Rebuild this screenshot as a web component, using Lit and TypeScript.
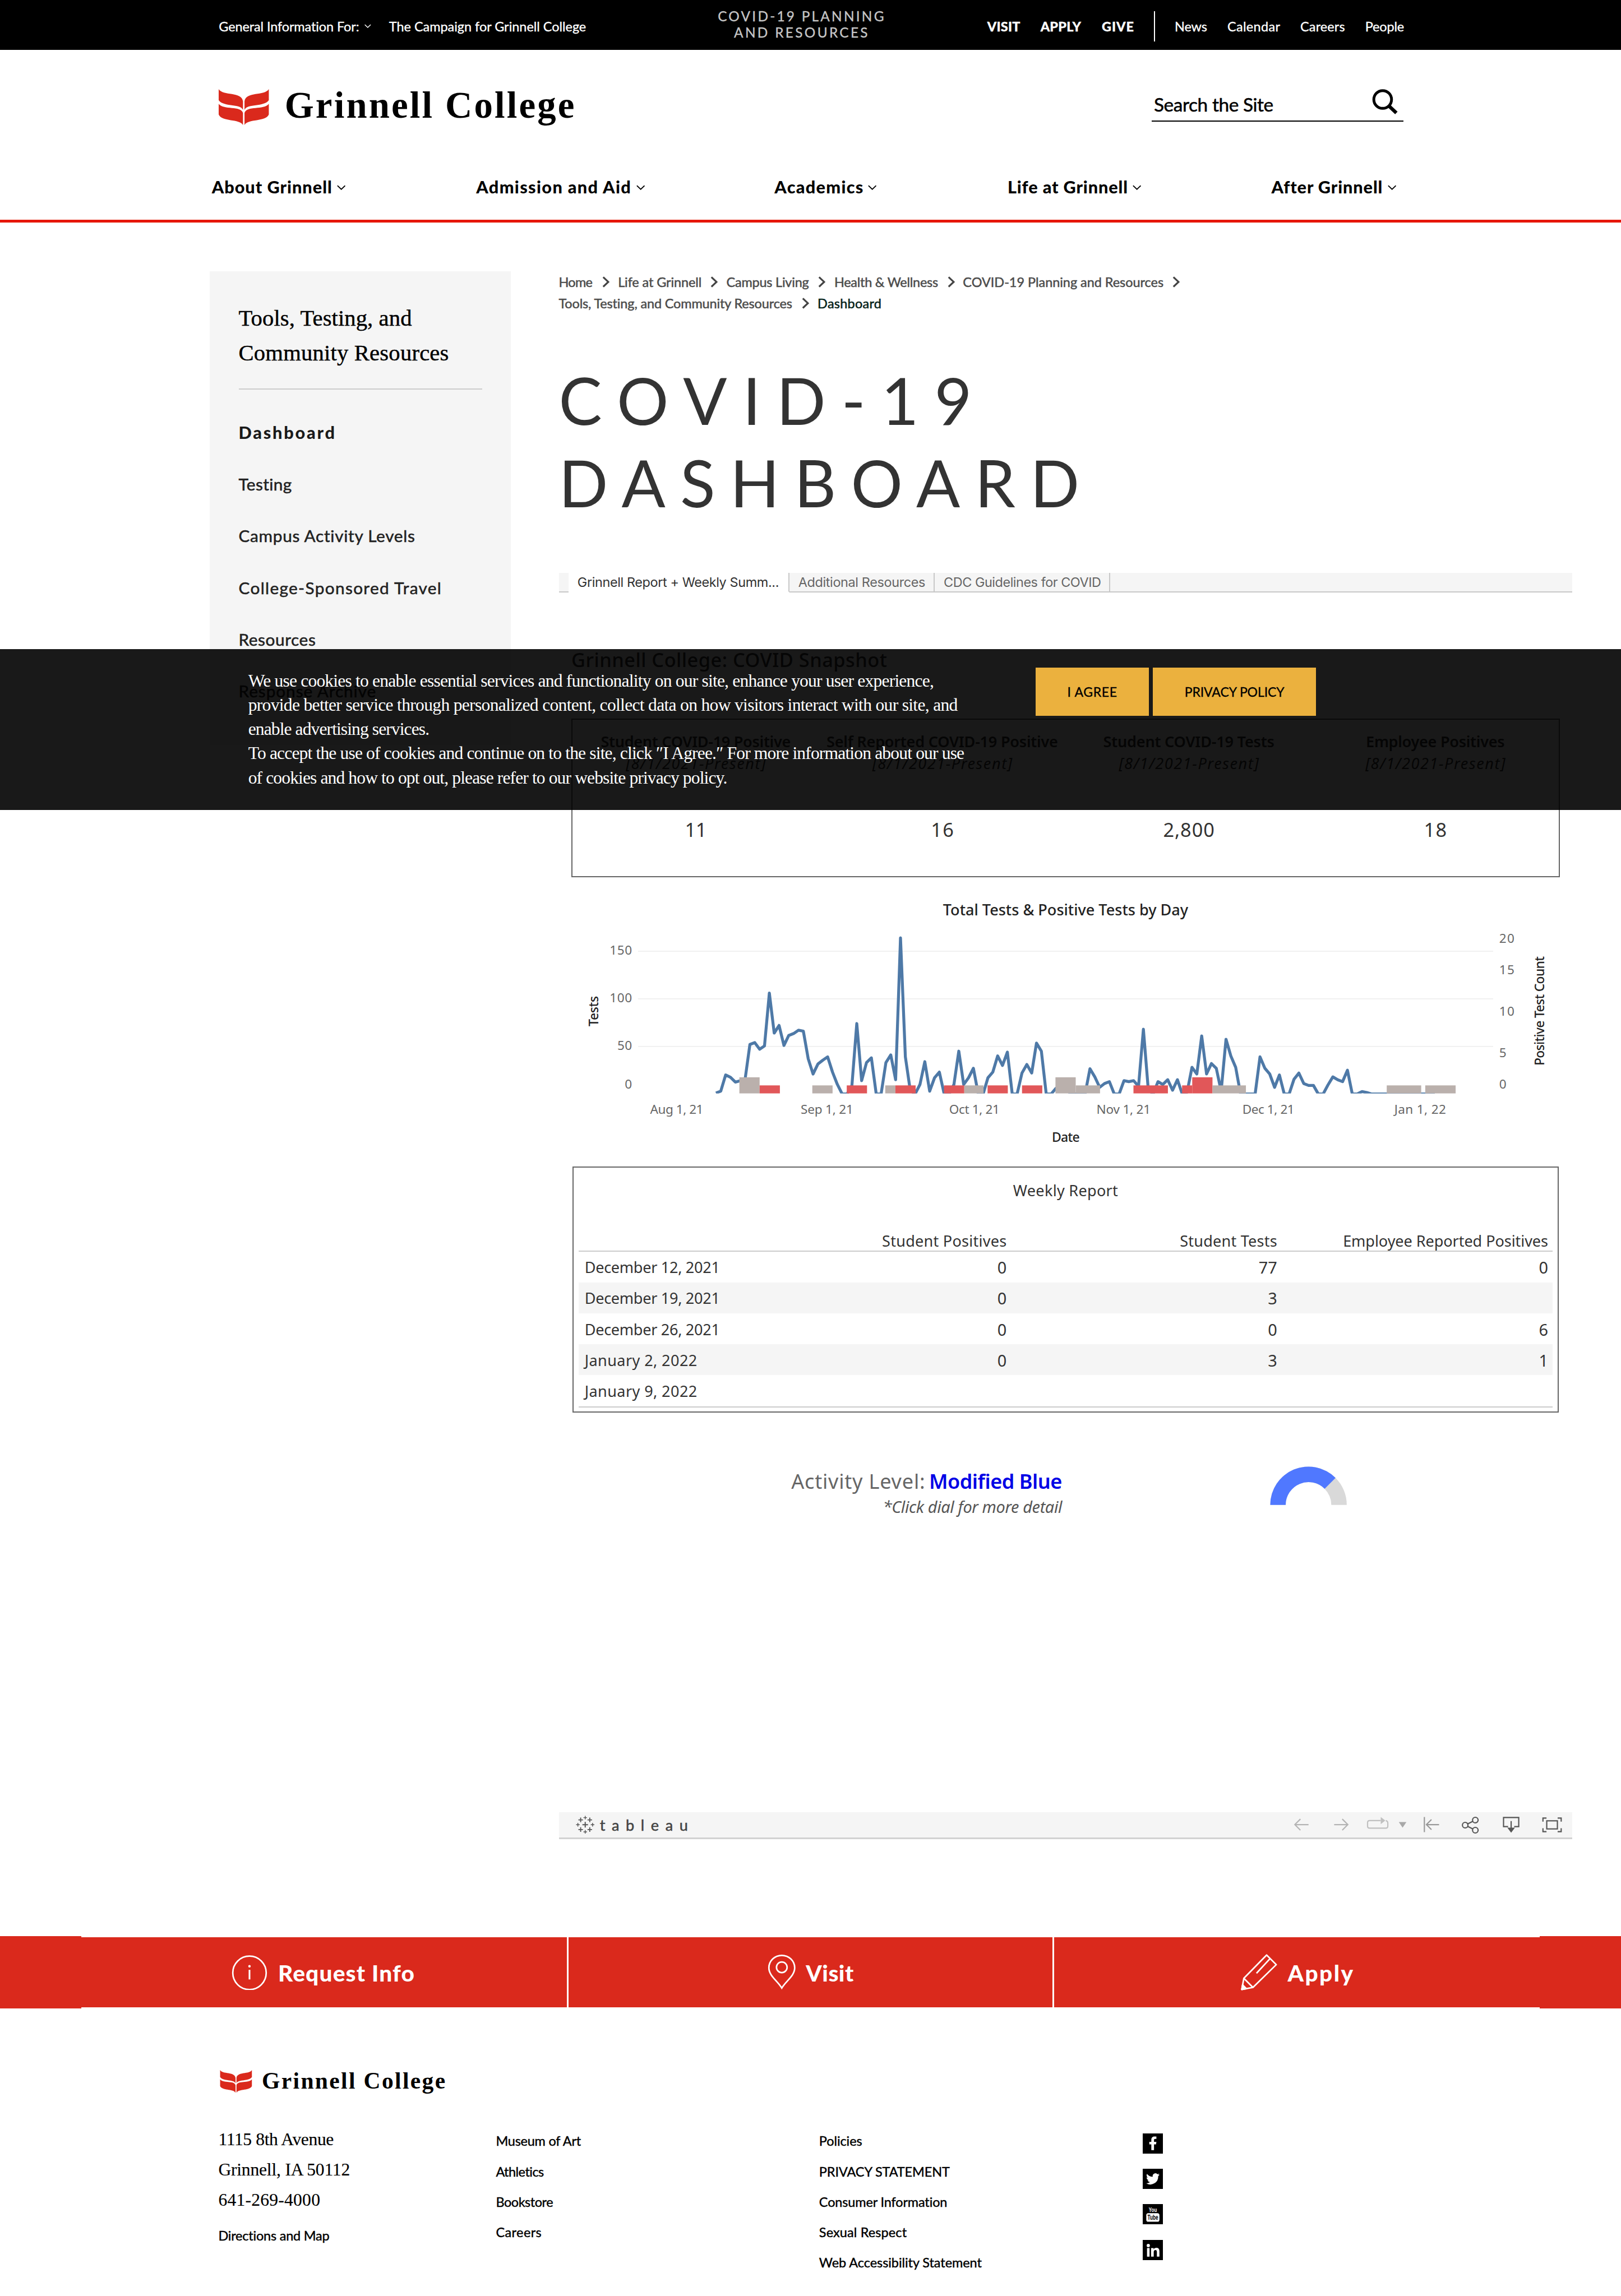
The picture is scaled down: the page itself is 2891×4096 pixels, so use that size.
import { LitElement, html, css, svg } from "lit";
import { customElement, property } from "lit/decorators.js";

/** A single line of text whose tracking is adjusted so that it spans a given width. */
@customElement("fit-text")
class FitText extends LitElement {
  @property({ type: Number }) w = 100;

  static styles = css`
    :host {
      display: inline-block;
      white-space: nowrap;
      font-variant-ligatures: none;
    }
    .line {
      display: inline-block;
    }
  `;

  firstUpdated() {
    this.style.width = `${this.w}px`;
    const line = this.renderRoot.querySelector(".line") as HTMLElement;
    const ratio = this.getBoundingClientRect().width / this.w;
    const natural = line.getBoundingClientRect().width / ratio;
    const count = (this.textContent || "").trim().length;
    if (count > 1) {
      this.style.letterSpacing = `${((this.w - natural) / (count - 1)).toFixed(3)}px`;
    }
  }

  render() {
    return html`<span class="line"><slot></slot></span>`;
  }
}

const fit = (text: string, w: number, cls = "") =>
  html`<fit-text class=${cls} .w=${w}>${text}</fit-text>`;

const down = (w: number, h: number) => html`
  <svg class="ico" width=${w} height=${h} viewBox="0 0 18 10">
    <path d="M1 1 L9 8.6 L17 1" fill="none" stroke="currentColor" stroke-width="2.2" />
  </svg>`;

const crumbArrow = html`
  <svg class="ico" width="15" height="22" viewBox="0 0 15 22">
    <path d="M2 1.5 L12 11 L2 20.5" fill="none" stroke="#444" stroke-width="3.6" />
  </svg>`;

const mark = (w: number, h: number) => html`
  <svg class="ico" width=${w} height=${h} viewBox="0 0 99 71">
    <g fill="#da291c">
      <path d="M0 0 C9 14 45 4 48 24 V41 C42 28 10 36 0 22 Z" />
      <path d="M0 29 C10 42 44 32 48 47 V71 C42 58 6 65 0 50 Z" />
      <path d="M99 0 C90 14 54 4 51 24 V41 C57 28 89 36 99 22 Z" />
      <path d="M99 29 C89 42 55 32 51 47 V71 C57 58 93 65 99 50 Z" />
    </g>
  </svg>`;

/* Tests per day, starting at August 9. */
const tests = [
  1, 3, 20, 17.5, 12.5, 14, 15, 52, 54, 47, 50.5, 106, 64, 72, 51, 61.5, 63.5, 67, 66, 37,
  21, 31.5, 35.5, 39, 23, 10, 0, 0, 9, 74, 14, 33, 38, 0, 0, 33, 41, 15, 164, 39,
  4, 0, 10, 34, 3, 17, 23, 0, 0, 10, 45, 10, 17, 27, 0, 0, 17, 23, 40, 30,
  44, 0, 0, 22, 31, 22, 53.5, 45, 0, 0, 6, 7, 7, 0, 0, 0, 0, 26.5, 18, 7,
  11, 13, 0, 0, 14, 13, 14, 8, 68, 5, 0, 13, 10, 15, 4, 15, 0, 2, 28, 21,
  61, 21, 32, 27, 3, 57.5, 40, 28, 0, 0, 0, 0, 39, 27, 21, 7, 20, 0, 0, 15.5,
  22, 11, 9, 9, 0, 0, 9.5, 18, 15, 13, 25, 0, 0, 2.5, 1.5, 0, 0, 0, 0, 0,
  0, 0, 0, 0, 0, 0, 0, 0, 0,
];

const GRAY = "#bab0ac";
const RED = "#e15759";
/* left, right, positives, colour */
const bars: [number, number, number, string][] = [
  [1460, 1500, 2, GRAY], [1500, 1540, 1, RED], [1604, 1644, 1, GRAY], [1672, 1712, 1, RED],
  [1748, 1768, 1, GRAY], [1768, 1808, 1, RED], [1864, 1904, 1, RED], [1904, 1942, 1, GRAY],
  [1950, 1990, 1, RED], [2018, 2058, 1, RED], [2084, 2124, 2, GRAY], [2124, 2172, 1, GRAY],
  [2238, 2306, 1, RED], [2334, 2354, 1, RED], [2354, 2394, 2, RED], [2394, 2460, 1, GRAY],
  [2738, 2806, 1, GRAY], [2814, 2874, 1, GRAY],
];

const label = (x: number, y: number, text: string, w: number, anchor = "start", cls = "tick") =>
  svg`<text class=${cls} x=${x} y=${y} text-anchor=${anchor} textLength=${w}>${text}</text>`;

const chart = () => {
  const pts = tests.map((v, i) => `${(1413.7 + i * 9.59).toFixed(1)},${(2161 - v * 1.88).toFixed(1)}`).join(" ");
  return html`
    <svg class="chart" width="2000" height="571" viewBox="1104 1733 2000 571">
      <defs><clipPath id="plot"><rect x="1260" y="1800" width="1690" height="360" /></clipPath></defs>
      ${label(2104, 1808, "Total Tests & Positive Tests by Day", 484, "middle", "ctitle")}
      ${[1879, 1973, 2067].map((y) => svg`<rect x="1260" y=${y - 1} width="1688" height="2" fill="#efefef" />`)}
      <g clip-path="url(#plot)">
        <polyline points=${pts} fill="none" stroke="#4e79a7" stroke-width="5.8" stroke-linejoin="round" />
        ${bars.map(([a, b, n, c]) => svg`<rect x=${a} y=${2160 - n * 16} width=${b - a} height=${n * 16} fill=${c} />`)}
      </g>
      ${label(1248, 1886, "150", 44, "end")}
      ${label(1248, 1980, "100", 44, "end")}
      ${label(1248, 2074, "50", 29, "end")}
      ${label(1248, 2150, "0", 14, "end")}
      ${label(2960, 1862, "20", 30)}
      ${label(2960, 1924, "15", 30)}
      ${label(2960, 2006, "10", 30)}
      ${label(2960, 2088, "5", 14)}
      ${label(2960, 2150, "0", 14)}
      ${label(1284, 2200, "Aug 1, 21", 105)}
      ${label(1581, 2200, "Sep 1, 21", 104)}
      ${label(1874, 2200, "Oct 1, 21", 100)}
      ${label(2165, 2200, "Nov 1, 21", 107)}
      ${label(2453, 2200, "Dec 1, 21", 103)}
      ${label(2753, 2200, "Jan 1, 22", 102)}
      ${label(2104.5, 2256, "Date", 55, "middle", "axis")}
      <g transform="translate(1181 1997.5) rotate(-90)">${label(0, 0, "Tests", 60, "middle", "axis")}</g>
      <g transform="translate(3049 1997) rotate(-90)">${label(0, 0, "Positive Test Count", 216, "middle", "axis")}</g>
    </svg>`;
};

const weekly: [string, number, string, string, string][] = [
  ["December 12, 2021", 267, "0", "77", "0"],
  ["December 19, 2021", 267, "0", "3", ""],
  ["December 26, 2021", 267, "0", "0", "6"],
  ["January 2, 2022", 222, "0", "3", "1"],
  ["January 9, 2022", 222, "", "", ""],
];

const stats: [string, number, string, string, number][] = [
  ["Student COVID-19 Positive", 375, "[8/1/2021-Present]", "11", 43],
  ["Self Reported COVID-19 Positive", 457, "[8/1/2021-Present]", "16", 45],
  ["Student COVID-19 Tests", 338, "[8/1/2021-Present]", "2,800", 101],
  ["Employee Positives", 274, "[8/1/2021-Present]", "18", 45],
];

const plus = (x: number, y: number, r: number, s: number) =>
  svg`<path d="M${x - r} ${y} H${x + r} M${x} ${y - r} V${y + r}" stroke-width=${s} />`;

@customElement("app-root")
class AppRoot extends LitElement {
  static styles = css`
    :host {
      display: block;
      width: 2891px;
      height: 4096px;
      overflow: hidden;
      background: #fff;
    }
    .page {
      position: relative;
      width: 3200px;
      height: 4534px;
      zoom: 0.90344;
      overflow: hidden;
      background: #fff;
      color: #000;
      font: 400 26px/32px Lato, "Liberation Sans", sans-serif;
    }
    .ico { display: block; flex: none; }
    .med { -webkit-text-stroke: 0.6px currentColor; }

    .top {
      box-sizing: border-box;
      height: 98px;
      padding: 6px 0 0 432px;
      background: #000;
      color: #fff;
      display: grid;
      align-items: center;
      grid-template-columns: 288px 48px 650px 531px 105px 121px 103px 41px 104px 144px 128px 100px;
      -webkit-text-stroke: 0.4px currentColor;
    }
    .plan {
      margin-top: -6px;
      width: 326px;
      text-align: center;
      color: #c6c6c6;
      font-size: 27px;
      display: flex;
      flex-direction: column;
      align-items: center;
    }
    .b { font-weight: 900; }
    .rule { width: 2.3px; height: 60px; background: #fff; }

    .head { height: 336px; border-bottom: 6px solid #e61600; }
    .brand {
      display: grid;
      padding: 78px 0 0 432px;
      height: 76px;
      grid-template-columns: 132px 1710px 496px;
      align-items: start;
    }
    .word {
      font: 700 74px/63px "Liberation Serif", serif;
      position: relative;
      left: -2px;
    }
    .search {
      height: 62px;
      border-bottom: 2.3px solid #000;
      display: flex;
      justify-content: space-between;
      padding: 0 10px 0 4px;
      box-sizing: content-box;
      width: 482px;
      font-size: 37px;
      line-height: 60px;
    }
    .nav {
      margin-top: 98px;
      padding-left: 418px;
      height: 40px;
      display: grid;
      grid-template-columns: 247px 275px 316px 273px 185px 275px 247px 274px 230px 40px;
      align-items: center;
      font: 900 34px/40px Lato, sans-serif;
    }

    .main { display: flex; padding: 96px 0 192px 414px; }
    .side {
      width: 594px;
      height: 935px;
      margin-right: 95px;
      box-sizing: border-box;
      padding: 59px 56px 0 57px;
      background: #f5f5f5;
      flex: none;
    }
    .stitle {
      font: 400 45px/68.5px "Liberation Serif", serif;
      padding-bottom: 36px;
      border-bottom: 2.3px solid #ccc;
      margin-bottom: 34px;
      display: flex;
      flex-direction: column;
      -webkit-text-stroke: 0.5px currentColor;
    }
    .side .items {
      display: flex;
      flex-direction: column;
      font-size: 33px;
      line-height: 102px;
      color: #222;
    }
    .side .items .b { font-weight: 900; font-size: 34px; color: #1a1a1a; }

    .content { width: 2001px; }
    .crumb { display: grid; height: 42px; align-items: center; color: #4d4d4d; padding-top: 1px; box-sizing: border-box; }
    .c1 { grid-template-columns: 86px 31px 183px 31px 181px 32px 224px 30px 414px 20px; }
    .c2 { grid-template-columns: 480px 31px 300px; }
    .here { color: #06231a; }
    h1 {
      margin: 90px 0 97px;
      font: 400 128px/162.5px Lato, sans-serif;
      color: #333;
      display: flex;
      flex-direction: column;
    }

    .tabs {
      display: grid;
      grid-template-columns: 18px 436px 287px 347px 1fr;
      height: 38px;
      font: 400 26px/38px Inter, sans-serif;
      color: #666;
      margin-left: 1px;
    }
    .tab {
      box-sizing: border-box;
      background: #f5f5f5;
      border-bottom: 2.3px solid #c8c8c8;
      border-right: 2.3px solid #c8c8c8;
      padding-left: 18px;
      height: 38px;
    }
    .tab.on { background: #fff; border-bottom-color: #fff; color: #333; }
    .tab.last { border-right: 0; }

    .viz { font-family: "Noto Sans", sans-serif; color: #333; }
    .snap {
      margin: 103px 0 87px 25px;
      font-size: 38px;
      line-height: 60px;
      font-weight: 500;
    }
    .stats {
      margin-left: 25px;
      box-sizing: border-box;
      width: 1951px;
      height: 313px;
      border: 2.3px solid #666;
      padding-top: 22px;
      display: grid;
      grid-template-columns: repeat(4, 1fr);
    }
    .stat {
      display: flex;
      flex-direction: column;
      align-items: center;
      font-size: 30px;
      line-height: 43px;
      font-weight: 600;
    }
    .when { font-style: italic; font-weight: 400; }
    .num { margin-top: 83px; font-size: 38px; line-height: 50px; font-weight: 400; }

    .chart { display: block; margin-left: 1px; }
    .tick { font: 400 25px "Noto Sans", sans-serif; fill: #666; }
    .ctitle { font: 500 30px "Noto Sans", sans-serif; fill: #222; }
    .axis { font: 500 25.5px "Noto Sans", sans-serif; fill: #222; }

    .weekly {
      margin-left: 27px;
      box-sizing: border-box;
      width: 1947px;
      height: 486px;
      border: 2.3px solid #666;
      padding: 15px 10px 0;
      font-size: 30px;
    }
    .wtitle { text-align: center; line-height: 60px; margin-bottom: 50px; }
    .wrow {
      display: grid;
      grid-template-columns: 433px 400px 534px 535px;
      padding: 2px 0 0 12px;
      box-sizing: border-box;
      height: 61px;
      align-items: center;
      line-height: 40px;
      justify-items: end;
    }
    .wrow > :first-child { justify-self: start; }
    .wrow:nth-child(even) { background: #f5f5f5; }
    .wrow.whead { height: 41px; padding-top: 0; border-bottom: 2.3px solid #ccc; background: none; }
    .wbody { border-bottom: 2.3px solid #ccc; color: #333; }
    .n { font-size: 32px; }

    .level { margin-top: 110px; display: flex; }
    .ltext {
      width: 994px;
      display: flex;
      flex-direction: column;
      align-items: flex-end;
      color: #666;
      font-size: 40px;
      line-height: 50px;
    }
    .lrow { display: flex; gap: 8px; padding-top: 1px; height: 49px; }
    .blue { color: #0000e6; font-weight: 600; }
    .click { font-size: 32px; font-style: italic; color: #555; }
    .dial { margin: -4px 0 0 410px; display: block; }

    .tbar {
      margin: 579px 0 0 1px;
      width: 2000px;
      height: 50px;
      box-sizing: content-box;
      border-bottom: 3.4px solid #d2d2d2;
      background: #f5f5f5;
      display: grid;
      grid-template-columns: 33px 47px 1365px 79px 72px 49px 56px 79px 79px 81px 40px;
      align-items: center;
    }
    .tword { font: 400 30px/50px Lato, sans-serif; color: #444; }

    .band {
      display: grid;
      grid-template-columns: 160px 962px 959px 959px 160px;
      height: 142px;
      color: #fff;
      font: 900 45px/60px Lato, sans-serif;
    }
    .edge { background: #da291c; }
    .cell {
      background: #da291c;
      margin: 2px 0;
      display: flex;
      align-items: center;
      box-sizing: border-box;
      border-right: 3.4px solid #fff;
    }
    .cell fit-text { padding-top: 3px; }
    .k1 { padding-left: 296px; gap: 20px; }
    .k2 { padding-left: 393px; gap: 20px; }
    .k3 { padding-left: 367px; gap: 20px; border-right: 0; }

    .flogo {
      display: grid;
      grid-template-columns: 84px 400px;
      padding: 121px 0 0 434px;
      height: 46px;
      align-items: center;
    }
    .fword { font: 700 46px/46px "Liberation Serif", serif; position: relative; left: -1px; }
    .foot {
      display: grid;
      grid-template-columns: 548px 638px 639px 40px;
      padding: 65px 0 0 431px;
      line-height: 60px;
      -webkit-text-stroke: 0.5px currentColor;
    }
    .col { display: flex; flex-direction: column; }
    .addr {
      margin-top: -3px;
      font: 400 35px/60px "Liberation Serif", serif;
      -webkit-text-stroke: 0.2px currentColor;
    }
    .dir { margin-top: 10px; font: 400 26px/60px Lato, sans-serif; }
    .social { gap: 30px; padding-top: 15px; }

    .cookie {
      position: absolute;
      left: 0;
      top: 1282px;
      width: 3200px;
      height: 318px;
      box-sizing: border-box;
      padding: 36px 0 0 490px;
      background: rgba(0, 0, 0, 0.9);
      color: #fff;
      display: grid;
      grid-template-columns: 1554px 224px 330px;
      column-gap: 0;
      align-items: start;
    }
    .msg {
      margin-top: 2px;
      display: flex;
      flex-direction: column;
      font: 400 35px/47.9px "Liberation Serif", serif;
    }
    .btn {
      height: 95.5px;
      background: #ebb13e;
      color: #000;
      text-align: center;
      font-size: 25.5px;
      line-height: 97px;
      -webkit-text-stroke: 0.4px currentColor;
    }
    .btn.pp { margin-left: 8px; width: 322px; }
  `;

  private tool(kind: string) {
    const g = "#b4b4b4";
    const d = "#555";
    const body: Record<string, unknown> = {
      back: svg`<path d="M34 20 H8 M18 9 L7 20 L18 31" stroke=${g} />`,
      fwd: svg`<path d="M6 20 H32 M22 9 L33 20 L22 31" stroke=${g} />`,
      loop: svg`<path d="M26 12 H4 Q0 12 0 16 V23 Q0 27 4 27 H36 Q40 27 40 23 V17 Q40 13 36 12" stroke="#c0c0c0" /><path d="M26 5 L35 12 L26 19 Z" fill="#c0c0c0" stroke="none" />`,
      caret: svg`<path d="M13 15 H28 L20.500 26 Z" fill="#a8a8a8" stroke="none" />`,
      revert: svg`<path d="M7 5 V35 M36 20 H12 M21 10 L11 20 L21 30" stroke="#999" />`,
      share: svg`<g stroke=${d}><circle cx="9" cy="21" r="5.500" /><circle cx="29" cy="11" r="5.500" /><circle cx="29" cy="31" r="5.500" /><path d="M14 18.500 L24 13.500 M14 23.500 L24 28.500" /></g>`,
      save: svg`<path d="M14 24 H5 V6 H35 V24 H26 M20 13 V30" stroke=${d} /><path d="M12.500 26 H27.500 L20 36 Z" fill=${d} stroke="none" />`,
      full: svg`<g stroke=${d}><rect x="9.500" y="12.500" width="21" height="16" /><path d="M2 14 V7 H9 M31 7 H38 V14 M38 27 V34 H31 M9 34 H2 V27" /></g>`,
    };
    return html`<svg class="ico" width="40" height="40" viewBox="0 0 40 40" fill="none" stroke-width="2.4" overflow="visible">${body[kind]}</svg>`;
  }

  render() {
    return html`
      <div class="page">
        <div class="top">
          ${fit("General Information For:", 277)}
          ${down(13, 8)}
          ${fit("The Campaign for Grinnell College", 389)}
          <div class="plan">
            ${fit("COVID-19 PLANNING", 328)}
            ${fit("AND RESOURCES", 264)}
          </div>
          ${fit("VISIT", 65, "b")}
          ${fit("APPLY", 80, "b")}
          ${fit("GIVE", 63, "b")}
          <div class="rule"></div>
          ${fit("News", 64)}
          ${fit("Calendar", 104)}
          ${fit("Careers", 88)}
          ${fit("People", 77)}
        </div>

        <div class="head">
          <div class="brand">
            ${mark(99, 71)}
            ${fit("Grinnell College", 572, "word")}
            <div class="search">
              ${fit("Search the Site", 236, "med")}
              <svg class="ico" width="51" height="50" viewBox="0 0 51 50">
                <circle cx="21" cy="20.500" r="17.500" fill="none" stroke="#000" stroke-width="5.5" />
                <path d="M33 33 L48 47" stroke="#000" stroke-width="7" />
              </svg>
            </div>
          </div>
          <div class="nav">
            ${fit("About Grinnell", 237)} ${down(17, 10)}
            ${fit("Admission and Aid", 305)} ${down(17, 10)}
            ${fit("Academics", 175)} ${down(17, 10)}
            ${fit("Life at Grinnell", 237)} ${down(17, 10)}
            ${fit("After Grinnell", 219)} ${down(17, 10)}
          </div>
        </div>

        <div class="main">
          <div class="side">
            <div class="stitle">
              ${fit("Tools, Testing, and", 342)}
              ${fit("Community Resources", 415)}
            </div>
            <div class="items">
              ${fit("Dashboard", 190, "b")}
              ${fit("Testing", 105, "med")}
              ${fit("Campus Activity Levels", 348, "med")}
              ${fit("College-Sponsored Travel", 400, "med")}
              ${fit("Resources", 152, "med")}
              ${fit("Response Archive", 271, "med")}
            </div>
          </div>

          <div class="content">
            <div class="crumb c1 med">
              ${fit("Home", 67)} ${crumbArrow}
              ${fit("Life at Grinnell", 165)} ${crumbArrow}
              ${fit("Campus Living", 163)} ${crumbArrow}
              ${fit("Health & Wellness", 205)} ${crumbArrow}
              ${fit("COVID-19 Planning and Resources", 396)} ${crumbArrow}
            </div>
            <div class="crumb c2 med">
              ${fit("Tools, Testing, and Community Resources", 461)} ${crumbArrow}
              ${fit("Dashboard", 126, "here")}
            </div>
            <h1>
              ${fit("COVID-19", 816)}
              ${fit("DASHBOARD", 1028)}
            </h1>

            <div class="viz">
              <div class="tabs">
                <div class="tab"></div>
                <div class="tab on">${fit("Grinnell Report + Weekly Summ...", 398)}</div>
                <div class="tab">${fit("Additional Resources", 251)}</div>
                <div class="tab">${fit("CDC Guidelines for COVID", 311)}</div>
                <div class="tab last"></div>
              </div>

              <div class="snap">${fit("Grinnell College: COVID Snapshot", 623)}</div>

              <div class="stats">
                ${stats.map(
                  ([name, w, when, n, nw]) => html`
                    <div class="stat">
                      ${fit(name, w)}
                      ${fit(when, 276, "when")}
                      ${fit(n, nw, "num")}
                    </div>`
                )}
              </div>

              ${chart()}

              <div class="weekly">
                <div class="wtitle">${fit("Weekly Report", 207)}</div>
                <div class="wrow whead">
                  <span></span>
                  ${fit("Student Positives", 246)}
                  ${fit("Student Tests", 192)}
                  ${fit("Employee Reported Positives", 405)}
                </div>
                <div class="wbody">
                  ${weekly.map(
                    ([d, w, a, b, c]) => html`
                      <div class="wrow">
                        ${fit(d, w)}
                        <span class="n">${a}</span><span class="n">${b}</span><span class="n">${c}</span>
                      </div>`
                  )}
                </div>
              </div>

              <div class="level">
                <div class="ltext">
                  <div class="lrow">${fit("Activity Level:", 264)} ${fit("Modified Blue", 263, "blue")}</div>
                  ${fit("*Click dial for more detail", 354, "click")}
                </div>
                <svg class="dial" width="152" height="76" viewBox="0 0 152 76">
                  <path d="M0.500 76 A75.500 75.500 0 0 1 151.500 76 H121 A45 45 0 0 0 31 76 Z" fill="#d9d9d9" />
                  <path d="M0.500 76 A75.500 75.500 0 0 1 129.400 22.600 L107.800 44.200 A45 45 0 0 0 31 76 Z" fill="#5078ff" />
                </svg>
              </div>

              <div class="tbar">
                <span></span>
                <svg class="ico" width="37" height="36" viewBox="0 0 37 36" stroke="#555" fill="none">
                  ${plus(18.5, 18, 5.5, 2.2)}
                  ${plus(9.5, 8.5, 4.5, 2)} ${plus(27.5, 8.5, 4.5, 2)}
                  ${plus(9.5, 27.5, 4.5, 2)} ${plus(27.5, 27.5, 4.5, 2)}
                  ${plus(18.5, 4, 3.5, 1.6)} ${plus(18.5, 32, 3.5, 1.6)}
                  ${plus(4, 18, 3.5, 1.6)} ${plus(33, 18, 3.5, 1.6)}
                </svg>
                ${fit("tableau", 174, "tword med")}
                ${["back", "fwd", "loop", "caret", "revert", "share", "save", "full"].map((k) => this.tool(k))}
              </div>
            </div>
          </div>
        </div>

        <div class="band">
          <div class="edge"></div>
          <div class="cell k1">
            <svg class="ico" width="73" height="70" viewBox="0 0 73 70" fill="none" stroke="#fff" stroke-width="3">
              <circle cx="36.500" cy="36" r="33" />
              <path d="M36.500 30 V49" stroke-width="3.4" />
              <circle cx="36.500" cy="23" r="2.400" fill="#fff" stroke="none" />
            </svg>
            ${fit("Request Info", 269)}
          </div>
          <div class="cell k2">
            <svg class="ico" width="56" height="70" viewBox="0 0 56 70" fill="none" stroke="#fff" stroke-width="3">
              <path d="M28 66 C20 52 2.500 42 2.500 26 A25.500 24.500 0 0 1 53.500 26 C53.500 42 36 52 28 66 Z" />
              <circle cx="28" cy="25" r="10.500" />
            </svg>
            ${fit("Visit", 94)}
          </div>
          <div class="cell k3">
            <svg class="ico" width="74" height="74" viewBox="0 0 74 74" fill="none" stroke="#fff" stroke-width="3" stroke-linejoin="round">
              <path d="M3 71 L7 49 L52 3 L71 22 L25 67 Z M7 49 L25 67 M58 11 L32 39" />
              <path d="M3 71 L4.500 62 L12 69.500 Z" fill="#fff" />
            </svg>
            ${fit("Apply", 129)}
          </div>
          <div class="edge"></div>
        </div>

        <div class="flogo">
          ${mark(64, 45)}
          ${fit("Grinnell College", 362, "fword")}
        </div>
        <div class="foot">
          <div class="col">
            <div class="col addr">
              ${fit("1115 8th Avenue", 228)}
              ${fit("Grinnell, IA 50112", 260)}
              ${fit("641-269-4000", 201)}
            </div>
            ${fit("Directions and Map", 220, "dir")}
          </div>
          <div class="col">
            ${fit("Museum of Art", 168)}
            ${fit("Athletics", 95)}
            ${fit("Bookstore", 113)}
            ${fit("Careers", 90)}
          </div>
          <div class="col">
            ${fit("Policies", 85)}
            ${fit("PRIVACY STATEMENT", 258)}
            ${fit("Consumer Information", 253)}
            ${fit("Sexual Respect", 173)}
            ${fit("Web Accessibility Statement", 321)}
          </div>
          <div class="col social">
            <svg class="ico" width="40" height="40" viewBox="0 0 40 40">
              <rect width="40" height="40" />
              <path d="M17 33 V21.500 H13 V16.500 H17 V12.500 C17 8 19.500 6 23.500 6 L27 6.200 V10.700 H24.500 C22.800 10.700 22.300 11.500 22.300 13 V16.500 H27 L26.300 21.500 H22.300 V33 Z" fill="#fff" />
            </svg>
            <svg class="ico" width="40" height="40" viewBox="0 0 40 40">
              <rect width="40" height="40" />
              <path transform="translate(6.500 6.500) scale(1.120)" fill="#fff" d="M24 4.600c-.9.400-1.800.7-2.800.8 1-.6 1.800-1.600 2.200-2.700-1 .6-2 1-3.100 1.200a4.900 4.900 0 0 0-8.400 4.500C7.700 8.200 4.100 6.300 1.700 3.300a4.900 4.900 0 0 0 1.500 6.600c-.8 0-1.600-.2-2.200-.6v.1c0 2.400 1.700 4.400 3.900 4.800-.7.200-1.500.2-2.200.1.600 2 2.400 3.400 4.600 3.400A9.900 9.900 0 0 1 0 19.700 14 14 0 0 0 21.500 7.200c1-.7 1.800-1.600 2.500-2.600z" />
            </svg>
            <svg class="ico" width="40" height="40" viewBox="0 0 40 40">
              <rect width="40" height="40" />
              <rect x="7" y="18" width="26" height="17" rx="4" fill="#fff" />
              <text x="20" y="16" text-anchor="middle" textLength="16" lengthAdjust="spacingAndGlyphs" font-family="Liberation Sans, sans-serif" font-weight="700" font-size="13" fill="#fff" stroke="none">You</text>
              <text x="20" y="31.500" text-anchor="middle" textLength="21" lengthAdjust="spacingAndGlyphs" font-family="Liberation Sans, sans-serif" font-weight="700" font-size="13.500" fill="#000" stroke="none">Tube</text>
            </svg>
            <svg class="ico" width="40" height="40" viewBox="0 0 40 40">
              <rect width="40" height="40" />
              <g fill="#fff">
                <circle cx="11" cy="11" r="3.200" />
                <rect x="8.500" y="16" width="5" height="17" />
                <path d="M16.500 16 H21.500 V18.500 C22.500 16.800 24.400 15.600 27 15.600 C31.500 15.600 33 18.500 33 23 V33 H28 V24 C28 21.500 27.300 20 25.200 20 C22.800 20 21.700 21.700 21.700 24.200 V33 H16.500 Z" />
              </g>
            </svg>
          </div>
        </div>

        <div class="cookie">
          <div class="msg">
            ${fit("We use cookies to enable essential services and functionality on our site, enhance your user experience,", 1354)}
            ${fit("provide better service through personalized content, collect data on how visitors interact with our site, and", 1401)}
            ${fit("enable advertising services.", 358)}
            ${fit("To accept the use of cookies and continue on to the site, click \u2033I Agree.\u2033 For more information about our use", 1414)}
            ${fit("of cookies and how to opt out, please refer to our website privacy policy.", 946)}
          </div>
          <div class="btn">${fit("I AGREE", 98)}</div>
          <div class="btn pp">${fit("PRIVACY POLICY", 197)}</div>
        </div>
      </div>
    `;
  }
}
